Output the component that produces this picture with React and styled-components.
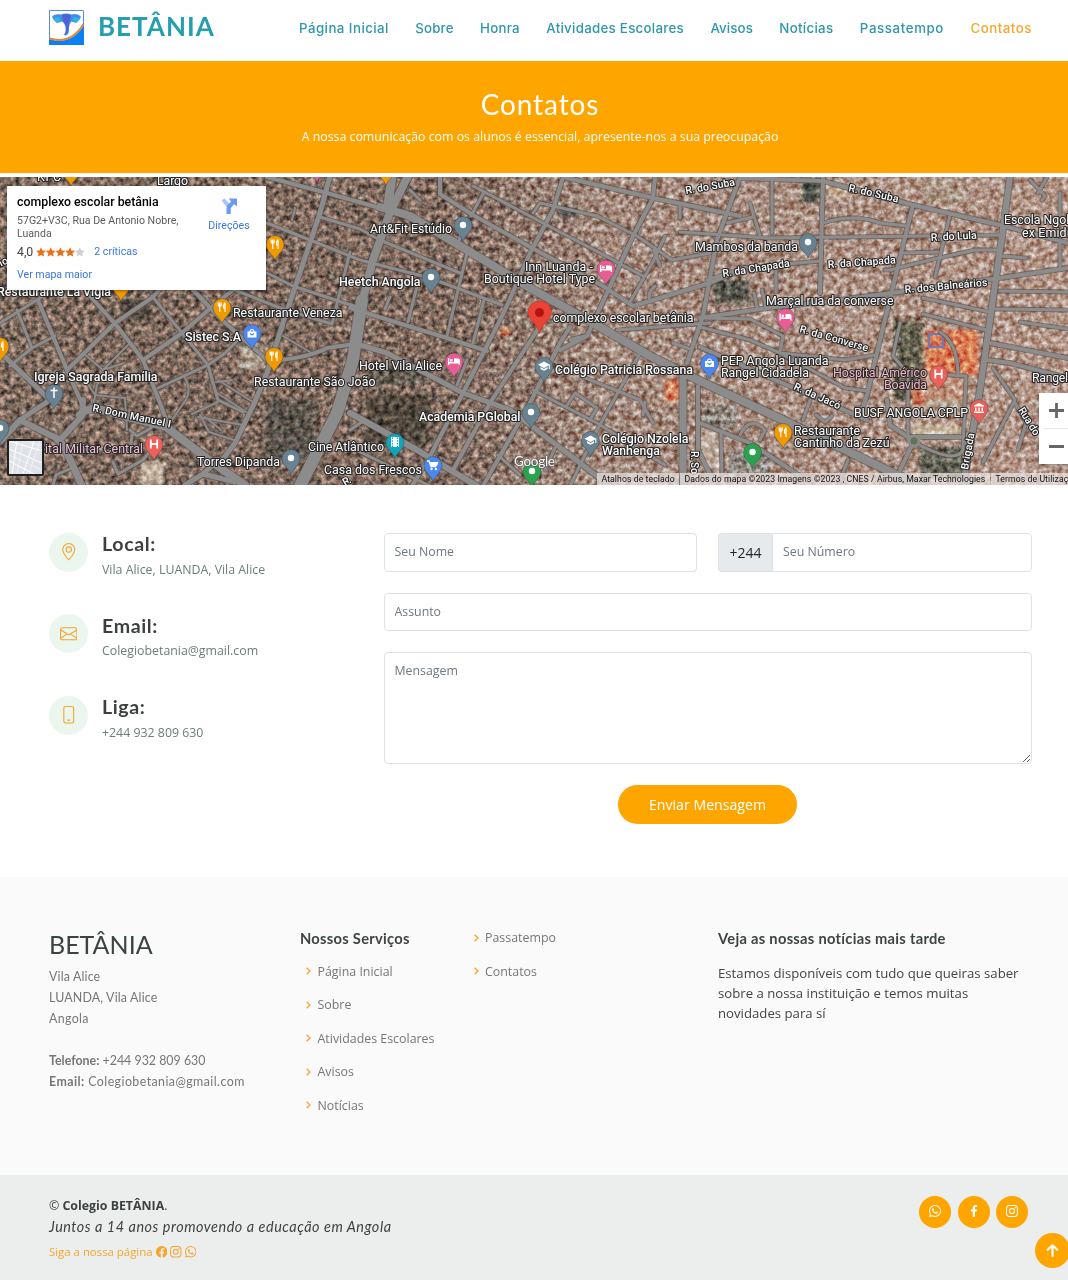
import React from "react";
import styled, { createGlobalStyle } from "styled-components";
import { BsGeoAlt, BsEnvelope, BsPhone, BsFacebook, BsInstagram, BsWhatsapp, BsArrowUpShort } from "react-icons/bs";
import { BiChevronRight, BiLogoWhatsapp, BiLogoFacebook, BiLogoInstagram } from "react-icons/bi";

const orange = "#ffa500";
const body = `"Open Sans", "Noto Sans", sans-serif`;
const heading = `Lato, "Open Sans", sans-serif`;
const geometric = `Inter, "Open Sans", sans-serif`;

const Global = createGlobalStyle`
  * { box-sizing: border-box; }
  body { margin: 0; background: #fff; font-family: ${body}; color: #444; }
  h1, h2, h3, h4, p, ul { margin: 0; padding: 0; font-weight: normal; }
  a { color: inherit; text-decoration: none; }
`;

const Page = styled.div`
  position: relative;
  width: 1068px;
  height: 1280px;
  overflow: hidden;
  display: flex;
  flex-direction: column;
`;

/* ---------- header ---------- */
const Header = styled.header`
  height: 61px;
  flex: none;
  display: flex;
  align-items: center;
  justify-content: space-between;
  padding: 0 36px 6px 49px;
`;
const Brand = styled.a`
  display: flex;
  align-items: center;
  gap: 14px;
`;
const BrandName = styled.h1`
  font: 700 26px/34px ${heading};
  letter-spacing: 1px;
  color: #259fb0;
  white-space: nowrap;
  margin-top: -4px;
`;
const Nav = styled.nav`
  display: flex;
  justify-content: space-between;
  width: 733px;
`;
const NavLink = styled.a`
  font: 500 13.3px/20px ${geometric};
  letter-spacing: ${(p) => p.$track || 0}px;
  white-space: nowrap;
  color: ${(p) => (p.$active ? "#f8a62c" : "#2f97ab")};
`;

/* ---------- banner ---------- */
const Banner = styled.section`
  height: 112px;
  flex: none;
  background: ${orange};
  color: #fff;
  text-align: center;
  padding: 26px 0 0 12px;
`;
const BannerTitle = styled.h2`
  font: 400 28px/34px ${heading};
  letter-spacing: 0.9px;
`;
const BannerText = styled.p`
  font: 400 12.35px/20px ${body};
  margin-top: 6px;
`;

/* ---------- map ---------- */
const MapFrame = styled.section`
  position: relative;
  height: 308px;
  margin-top: 4px;
  flex: none;
  overflow: hidden;
  background: #7a675b;
`;
const MapCanvas = styled.svg`
  display: block;
`;
const Place = styled.text`
  font: ${(p) => (p.$street ? "500 10.5px" : "400 12.4px")} Roboto, sans-serif;
  fill: ${(p) => p.$fill || "#fff"};
  stroke: #262626;
  stroke-width: ${(p) => (p.$fill ? 2 : 2.2)}px;
  stroke-linejoin: round;
  paint-order: stroke;
`;
const InfoCard = styled.div`
  position: absolute;
  left: 7px;
  top: 9px;
  width: 259px;
  height: 104px;
  background: #fff;
  box-shadow: 0 1px 3px rgba(0, 0, 0, 0.4);
  padding: 9px 10px;
  display: flex;
  justify-content: space-between;
  font-family: Roboto, sans-serif;
`;
const InfoMain = styled.div`
  width: 172px;
`;
const InfoTitle = styled.h3`
  font: 500 12.35px/15px Roboto, sans-serif;
  color: #000;
`;
const InfoAddress = styled.p`
  font-size: 10.6px;
  line-height: 13px;
  color: #5b5b5b;
  margin-top: 4px;
  white-space: nowrap;
`;
const Rating = styled.div`
  display: flex;
  align-items: center;
  margin-top: 4px;
  height: 16px;
  font-size: 12.3px;
  color: #444;
`;
const Stars = styled.svg`
  margin: 0 9px 0 3px;
`;
const BlueLink = styled.a`
  display: block;
  font-size: ${(p) => p.$size || 10.6}px;
  line-height: 14px;
  color: #3a76e0;
`;
const MoreLink = styled(BlueLink)`
  margin-top: 8px;
`;
const Directions = styled.div`
  width: 54px;
  display: flex;
  flex-direction: column;
  align-items: center;
  padding-top: 2px;
  gap: 4px;
`;
const ZoomPanel = styled.div`
  position: absolute;
  left: 1039px;
  top: 216px;
  width: 36px;
  height: 71px;
  background: #fff;
  box-shadow: 0 1px 3px rgba(0, 0, 0, 0.3);
`;
const LayerThumb = styled.div`
  position: absolute;
  left: 7px;
  top: 262px;
  width: 37px;
  height: 37px;
  border: 2px solid #1f1f1f;
  border-radius: 2px;
  overflow: hidden;
  background: #dfe2e8;
`;
const Attribution = styled.div`
  position: absolute;
  left: 597px;
  bottom: 0;
  display: flex;
  height: 12px;
  font: 400 8.7px/12px Roboto, sans-serif;
  letter-spacing: 0.07px;
  color: #111;
  white-space: nowrap;
`;
const AttributionItem = styled.span`
  background: rgba(235, 230, 228, 0.72);
  padding: 0 5px 0 4.5px;
  margin-right: 1px;
  width: ${(p) => p.$w}px;
`;

/* ---------- contact ---------- */
const Contact = styled.section`
  height: 392px;
  flex: none;
  display: grid;
  grid-template-columns: 334.5px 648.5px;
  padding: 47.5px 36px 0 49px;
`;
const InfoList = styled.div`
  display: flex;
  flex-direction: column;
  gap: 42.5px;
`;
const InfoRow = styled.div`
  display: flex;
  gap: 14px;
  height: 39px;
`;
const RoundIcon = styled.span`
  width: 39px;
  height: 39px;
  border-radius: 50%;
  background: #ebf7ee;
  display: grid;
  place-items: center;
  color: #f6a42c;
  font-size: 17.5px;
  flex: none;
`;
const InfoHeading = styled.h4`
  font: 700 19.6px/24px ${heading};
  color: #3c403f;
  letter-spacing: 0.6px;
  margin-top: -0.5px;
`;
const InfoText = styled.p`
  font-size: 12.35px;
  line-height: 19px;
  margin-top: 3.5px;
  color: #6a7f77;
  white-space: nowrap;
`;
const Form = styled.form`
  display: grid;
  grid-template-columns: 313.5px 313.5px;
  grid-template-rows: 39px 38.5px 111.5px 39px;
  gap: 21px;
`;
const fieldStyle = `
  border: 1px solid #dde1e5;
  border-radius: 4px;
  background: #fff;
  font: 400 12.35px/18px ${body};
  padding: 0 10px;
  outline: none;
  min-width: 0;
  &::placeholder { color: #6f7780; opacity: 1; }
`;
const Field = styled.input`
  ${fieldStyle}
  grid-column: ${(p) => (p.$wide ? "1 / -1" : "auto")};
`;
const Message = styled.textarea`
  ${fieldStyle}
  grid-column: 1 / -1;
  padding-top: 8.5px;
  resize: vertical;
`;
const PhoneGroup = styled.div`
  display: flex;
`;
const Prefix = styled.span`
  width: 54px;
  background: #e7eaed;
  border: 1px solid #dde1e5;
  border-right: 0;
  border-radius: 4px 0 0 4px;
  font-size: 14px;
  line-height: 37px;
  text-align: center;
  color: #212529;
`;
const PhoneField = styled(Field)`
  flex: 1;
  border-radius: 0 4px 4px 0;
`;
const Submit = styled.button`
  grid-column: 1 / -1;
  justify-self: center;
  width: 179px;
  border: 0;
  border-radius: 20px;
  background: ${orange};
  color: #fff;
  font: 400 14.15px/39px ${body};
  padding: 0;
`;

/* ---------- footer ---------- */
const FooterTop = styled.footer`
  height: 298px;
  flex: none;
  background: #fafafa;
  display: grid;
  grid-template-columns: 251px 167.5px 250.500px 1fr;
  padding: 50.5px 36px 0 49px;
`;
const FooterBrand = styled.h3`
  font: 400 25px/32px ${heading};
  letter-spacing: 0;
  color: #3b4442;
`;
const Address = styled.p`
  font: 400 12.4px/21.1px ${heading};
  color: #777;
  margin-top: 6px;
  white-space: nowrap;
  b { font-weight: 700; }
`;
const Line = styled.span`
  display: block;
  min-height: 21.1px;
  letter-spacing: ${(p) => p.$track || 0}px;
`;
const ColumnTitle = styled.h4`
  font: 700 14.7px/20px ${heading};
  color: #3f4443;
  white-space: nowrap;
  letter-spacing: 0.28px;
`;
const LinkList = styled.ul`
  list-style: none;
  display: flex;
  flex-direction: column;
  gap: 13.5px;
  padding: ${(p) => p.$pad};
`;
const LinkItem = styled.li`
  display: flex;
  align-items: center;
  gap: 1.5px;
  height: 20px;
  font-size: 12.4px;
  color: #777;
  white-space: nowrap;
  svg { color: #f5a52c; font-size: 16px; flex: none; }
`;
const News = styled.p`
  font-size: 13.2px;
  line-height: 20px;
  margin-top: 15.5px;
  color: #444;
  white-space: nowrap;
`;
const FooterBottom = styled.footer`
  height: 105px;
  flex: none;
  background: #eceeed;
  display: flex;
  justify-content: space-between;
  padding: 21px 40px 0 49px;
`;
const Copyright = styled.p`
  font-size: 12.35px;
  line-height: 19px;
  color: #3d4241;
`;
const Motto = styled.p`
  font: italic 400 14.4px/22px ${heading};
  letter-spacing: 0.54px;
  color: #3d4241;
  margin-top: 1px;
`;
const Follow = styled.p`
  display: flex;
  align-items: center;
  gap: 3px;
  margin-top: 5px;
  font-size: 11.4px;
  line-height: 18px;
  color: #f6a52e;
  svg { font-size: 11.5px; }
`;
const Socials = styled.div`
  display: flex;
  gap: 6.5px;
`;
const Social = styled.a`
  width: 32px;
  height: 32px;
  border-radius: 50%;
  background: ${orange};
  color: #fff;
  display: grid;
  place-items: center;
  font-size: 16px;
  svg { margin-top: -2px; }
`;
const BackToTop = styled.a`
  position: absolute;
  left: 1034.5px;
  top: 1233px;
  width: 35px;
  height: 35px;
  border-radius: 50%;
  background: ${orange};
  color: #fff;
  display: grid;
  place-items: center;
  font-size: 25px;
  svg { stroke: #fff; stroke-width: 0.4; }
`;

/* ---------- map data ---------- */
const roads = [
  [4, "M38 300 67 370 83 406"], [3, "M0 323 40 298 54 288"], [3, "M17 310 32 348 10 366M32 348 55 336"],
  [5, "M0 352 50 400 20 420"], [6, "M0 442 20 420 60 440 82 416 83 400"], [7, "M56 438 64 446 82 486"],
  [8, "M80 415Q88 404 112 413L166 427 213 463 245 485"], [4, "M67 370 115 323 153 297 160 289"],
  [4, "M90 296 117 326 143 360 160 403 170 430"], [3, "M152 296 182 333 208 365 218 400 243 412"],
  [4, "M143 360 182 333 213 306 233 290"], [3, "M158 388 208 365 224 354 238 340"],
  [4, "M193 290 222 320 267 360"], [5, "M330 176 320 213 283 323 267 373 253 406 235 443 220 463"],
  [3, "M267 223 310 240 360 260 430 278 502 305"], [3, "M235 290 280 308 332 324 350 252M267 273 293 286 360 308"],
  [4, "M267 177 327 193 387 210"], [3, "M320 217 360 229 380 240 460 273"],
  [4, "M280 360Q310 357 327 348L355 344"], [2, "M283 336 310 352M292 220 295 208"],
  [12, "M362 300 353 360 337 413 300 486"], [8, "M408 176 390 212 373 260 360 310"],
  [9, "M392 176 388 205"], [8, "M380 207 410 216 467 250 530 288 593 323 650 356 700 381 783 420 893 473 925 488"],
  [2, "M83 353 103 370 128 345M83 376 95 395 125 398 127 430M93 408 97 385M103 370 124 363"],
  [2, "M185 378Q193 392 183 404L172 420M218 380 253 402M217 393 246 412M216 382 232 380M192 414 218 402"],
  [2, "M198 417 243 425M200 415 209 432 234 440M205 417 221 430"], [3, "M130 430 137 436 151 428M132 435 130 452"],
  [3, "M113 462 118 474 143 460 155 445M53 485 56 475 74 467"], [5, "M185 485 203 474 235 482M203 474 216 462"],
  [4, "M563 177 553 210 530 253 505 310 463 393 430 456 412 486"], [4, "M440 177V194L473 215 532 248 603 286 633 306 710 283 745 268"],
  [3, "M473 186 543 223 600 253 643 276M484 192 471 216"], [3, "M533 213 540 203 597 216 637 236 672 260 710 253"],
  [4, "M563 177 653 198 740 216"], [4, "M655 177 653 198 633 236 607 293 587 336 571 340 M587 336 560 350"],
  [4, "M570 327 560 343 530 403 483 486"], [4, "M540 326 490 403 453 470"], [4, "M350 308 447 338 487 351"],
  [3, "M467 253 447 336M484 300 473 343M417 286 408 322M390 297 385 309M461 235 457 246"],
  [5, "M360 345 387 353 463 393 510 410 550 440 610 486"], [3, "M467 360 457 385M410 190 420 200"],
  [6, "M350 413 417 450 477 486"], [3, "M350 430 362 422M350 447 430 486"], [3, "M533 390 597 423 665 465"],
  [3, "M640 353 597 430 570 486M498 455 520 475M555 448 545 470"],
  [3, "M566 407 575 393 597 408 590 420M583 377 640 400 653 423M645 402 643 415"],
  [7, "M683 373V486"], [4, "M698 386V450L713 480"], [4, "M740 177 717 240 703 316 687 363"],
  [3, "M617 330 710 323M673 343 690 349M665 236 653 262 630 302M654 250 660 266M655 286Q647 292 650 302"],
  [3, "M680 205 680 218 M680 232 767 238 1000 235"], [4, "M740 178 823 181 913 205 1000 225 1068 243"],
  [4, "M823 177 820 293"], [3, "M772 177V233M750 203 760 236M727 223 753 217"], [6, "M1010 177 1002 236 990 320 980 390 963 486"],
  [4, "M913 205 897 270 880 340 867 395 860 415"], [3, "M823 223Q853 213 880 223L907 226M904 253 938 252M885 270 892 270"],
  [3, "M707 280 743 268 820 261M776 268 776 292M754 293 757 307M762 290 766 307"], [3, "M890 270 930 260 975 250 997 250"],
  [3, "M950 215 935 277"], [4, "M700 318 767 308 833 301 1000 278 1068 268"], [3, "M1000 291 1068 292M995 309 1068 310"],
  [3, "M923 298 990 312M923 314 986 330"], [4, "M990 343 1068 358M987 360 1010 363 1068 378"],
  [3, "M703 318 750 319 783 336 780 352"], [3, "M700 327 750 340 780 353 845 360 875 355M780 353 845 388 867 391"],
  [4, "M700 347 780 382 867 420"], [3, "M810 400 803 420M816 415 825 422 832 416"],
  [3, "M900 323 893 356 908 373V440M940 332Q957 342 958 373M935 374 966 376 963 450Q955 465 914 442"],
  [4, "M887 400 890 425 908 437 962 437M914 441 900 470"], [3, "M993 368 1015 400 983 462M1015 403 1030 430"],
  [4, "M700 423 750 443 800 476"], [3, "M721 433 722 475M740 435Q750 415 765 430L760 440M848 460 838 486"],
  [3, "M1030 180 1045 196 1042 200M1047 177 1038 193M1060 193V220M1020 322 1068 329M1002 256 1026 258M1027 420 1018 450M1060 240V270"],
];

const plots = [
  ["#4b443b", 365, 395, 65, 50], ["#55514a", 265, 400, 50, 60], ["#4b463d", 120, 300, 30, 20], ["#5a5a4a", 893, 320, 30, 80],
  ["#e27a4e", 926, 330, 52, 45], ["#d06c48", 912, 385, 55, 20], ["#d0c2aa", 912, 425, 48, 12], ["#b6aa94", 925, 398, 40, 10],
  ["#cfc0ab", 140, 462, 24, 22], ["#555a4e", 920, 447, 44, 30], ["#3f4a42", 802, 180, 18, 22], ["#c7ae95", 828, 184, 18, 14],
  ["#ac9a88", 925, 178, 40, 26], ["#4a4e44", 714, 280, 36, 24], ["#8a8780", 703, 405, 34, 22], ["#c0b0a2", 702, 432, 18, 38],
  ["#e0855a", 665, 380, 16, 22], ["#b5a998", 240, 345, 25, 25], ["#5c5950", 370, 365, 50, 20],
  ["#8d8b86", 730, 450, 40, 26], ["#c39781", 922, 376, 45, 20], ["#474c4e", 560, 206, 16, 12], ["#dc825c", 500, 328, 10, 8],
];

const pins = [
  ["food", 275, 245], ["food", 222, 308], ["food", 274, 357], ["food", 783, 433], ["food", 0, 347], ["food", 121, 286],
  ["food", 71, 171], ["food", 386, 170], ["dot", 463, 226], ["dot", 431, 278], ["dot", 808, 243], ["dot", 531, 413],
  ["dot", 291, 459], ["dot", 0, 429], ["bed", 606, 269.500], ["bed", 454, 362.500], ["bed", 785.500, 318], ["bag", 252, 334],
  ["bag", 709.500, 363.500], ["cart", 433, 466], ["film", 395, 443], ["school", 544, 367], ["school", 590.500, 441], ["cross", 54, 394],
  ["hospital", 154, 445], ["hospital", 938.500, 375], ["bank", 979, 409], ["park", 532, 472], ["park", 752.500, 453], ["bed", 317, 167],
];
const pinColors = {
  food: "#f29900", dot: "#688291", bed: "#e75e93", bag: "#4b87ee", cart: "#4b87ee", film: "#12a4b8", school: "#688291",
  cross: "#688291", hospital: "#ef6058", bank: "#e9605b", park: "#2aa24e",
};

const labels = [
  ["KFC", 37, 181, 24], ["Largo", 157, 185, 31], ["Restaurante La Vigia", -3, 296, 114], ["Restaurante Veneza", 233, 316.500, 109.500],
  ["Sistec S.A", 185, 341, 56], ["Restaurante São João", 254, 386, 121.500], ["Igreja Sagrada Família", 34, 381, 123.500],
  ["Torres Dipanda", 197, 466, 83], ["Cine Atlântico", 308, 451, 76], ["Casa dos Frescos", 324, 474, 98],
  ["Art&Fit Estúdio", 370, 233, 82], ["Heetch Angola", 339, 285.500, 81.500], ["Hotel Vila Alice", 359, 370, 83],
  ["Academia PGlobal", 419, 421, 101.500], ["Inn Luanda -", 525, 270.500, 68], ["Boutique Hotel Type", 484, 283, 111],
  ["complexo escolar betânia", 553, 321.500, 140.500], ["Colégio Patricia Rossana", 555, 374, 138], ["Colégio Nzolela", 602, 443, 86.500],
  ["Wanhenga", 602, 455, 58], ["Mambos da banda", 695, 251, 103], ["Marçal rua da converse", 766, 304.500, 127.500],
  ["PEP Angola Luanda", 721, 365, 107.500], ["Rangel Cidadela", 721, 377, 88], ["Restaurante", 794, 434.500, 66],
  ["Cantinho da Zezú", 794, 447, 95.500], ["BUSF ANGOLA CPLP", 854, 417, 114], ["Escola Ngola", 1004, 224, 72],
  ["ex Emidio", 1022, 237, 55], ["Rangel", 1032, 382, 36],
  ["pital Militar Central", 38, 453, 105, "#eebfd5"], ["Hospital Américo", 833, 377, 94, "#f3b9c9"], ["Boavida", 884, 389, 43, "#f3b9c9"],
];
const boldPlaces = ["Sistec S.A", "Heetch Angola", "Igreja Sagrada Família", "Academia PGlobal", "Colégio Patricia Rossana", "Colégio Nzolela", "Wanhenga", "Restaurante La Vigia"];
const Label = styled(Place)`
  font-weight: ${(p) => (p.$bold ? 500 : 400)};
`;
const streets = [
  ["R. do Suba", 686, 194, 50, -10], ["R. do Suba", 848, 191, 51, 13], ["R. do Lula", 931, 241, 46, -3],
  ["R. da Chapada", 723, 277, 68, -9], ["R. da Chapada", 828, 268, 68, -4], ["R. dos Balneários", 905, 293, 83, -5],
  ["R. da Converse", 799, 332, 71, 16], ["R. da Jacó", 793, 389, 50, 24], ["R. Dom Manuel I", 92, 411, 80, 12],
  ["R. So", 691, 451, 23, 90], ["Brigada", 968, 470, 37, -80], ["Rua do", 1018, 410, 31, 58], ["R.", 345, 486, 8, -30], ["no", -2, 268, 12, -25],
];

function Glyph({ kind }) {
  const s = { fill: "none", stroke: "#fff", strokeWidth: 1.5 };
  switch (kind) {
    case "food": return <path {...s} d="M-3.800-4.500V-1.500Q-2.300.500-.800-1.500V-4.500M-2.300-4.500V5M3-4.500V5M2.800-4Q1-2 1.600 1H3" strokeWidth="1.200" />;
    case "bed": return <path fill="#fff" d="M-6-3.500h1.300v4h4.700v-3.500h4q2 0 2 2v4.500h-1.300v-1.500h-9.400v1.500H-6zM-2.700-2.600a1.400 1.400 0 1 1 0 2.800a1.400 1.400 0 0 1 0-2.800z" />;
    case "bag": return <path fill="#fff" fillRule="evenodd" d="M-4.500-1.500h2a2.500 2.500 0 0 1 5 0H4.500v6H-4.500zM-1.500-1.500h3a1.500 1.500 0 0 0-3 0zM-2.500.5q2.500 4 5 0l-.8-.4q-1.700 2-3.400 0z" />;
    case "cart": return <><path {...s} d="M-6-4h2l2 5.500h5" /><path fill="#fff" d="M-3-3H5.500L4 1h-6z" /><circle cx="-1.500" cy="4" r="1.200" fill="#fff" /><circle cx="3" cy="4" r="1.200" fill="#fff" /></>;
    case "film": return <><path fill="#fff" d="M-4-5h8V5h-8z" /><path stroke="#12a4b8" strokeWidth="1.200" strokeDasharray="1.500 1.200" d="M-2.600-4.500V5M2.600-4.500V5" /></>;
    case "school": return <><path fill="#fff" d="M0-4.500 6-1.300 0 1.900-6-1.300zM-3.500 1 0 3 3.500 1V3L0 4.800-3.500 3z" /><path {...s} strokeWidth="1" d="M5.300-1.300V3" /></>;
    case "cross": return <path {...s} d="M0-5.500V5M-3.500-2.500H3.500" />;
    case "hospital": return <path {...s} strokeWidth="1.800" d="M-3.200-4.500V4.500M3.200-4.500V4.500M-3 0H3" />;
    case "bank": return <path fill="#fff" d="M0-5 5-2.500v1H-5v-1zM-4-.5h1.500v3.500H-4zM-.7-.5H.7v3.500H-.7zM2.500-.5H4v3.500H2.500zM-5 3.500H5V5H-5z" />;
    default: return <circle r="3.200" fill="#fff" />;
  }
}

function CityMap() {
  return (
    <MapCanvas width="1068" height="308" viewBox="0 177 1068 308">
      <defs>
        <linearGradient id="ground" x1="0" x2="1">
          <stop offset="0" stopColor="#7e6a5e" /><stop offset=".42" stopColor="#826c60" />
          <stop offset=".56" stopColor="#a38a7d" /><stop offset="1" stopColor="#b39688" />
        </linearGradient>
        <filter id="roofs" x="0" y="0" width="100%" height="100%" colorInterpolationFilters="sRGB">
          <feTurbulence type="fractalNoise" baseFrequency=".19" numOctaves="3" seed="8" />
          <feColorMatrix values="1.200 .2 0 0 -.2  1.200 0 .1 0 -.15  1.200 0 .2 0 -.2  0 0 0 0 1" />
        </filter>
        <filter id="soft"><feGaussianBlur stdDeviation="2" /></filter>
      </defs>
      <rect y="177" width="1068" height="308" fill="url(#ground)" />
      <g filter="url(#soft)" opacity=".85">
        {plots.map(([c, x, y, w, h], i) => <rect key={i} x={x} y={y} width={w} height={h} fill={c} />)}
      </g>
      <rect y="177" width="1068" height="308" filter="url(#roofs)" style={{ mixBlendMode: "overlay" }} opacity=".85" />
      <path d="M929 334h14v13h-14z" fill="none" stroke="#7a78a6" strokeWidth="2.500" />
      <g fill="none" strokeLinejoin="round" strokeLinecap="round">
        {roads.map(([w, d], i) => <path key={i} d={d} stroke="#57504d" strokeOpacity=".65" strokeWidth={w + 2} />)}
        {roads.map(([w, d], i) => <path key={i} d={d} stroke="#8d8c8c" strokeWidth={w} />)}
      </g>
      <circle cx="914" cy="441" r="5" fill="#5f7358" stroke="#8b8b8a" strokeWidth="3" />
      {pins.map(([kind, x, y], i) => (
        <g key={i} transform={`translate(${x} ${y})`}>
          <path d="M0 15.500C-2 9-9 6.500-9-.5A9 9 0 1 1 9-.5C9 6.500 2 9 0 15.500Z" fill={pinColors[kind]} stroke="#33414a" strokeOpacity=".55" strokeWidth=".8" />
          <g transform="translate(0 -1)"><Glyph kind={kind} /></g>
        </g>
      ))}
      <path d="M539.500 333.500C537 323 528 320 528 312.500A11.700 11.700 0 1 1 551.400 312.500C551.400 320 542 323 539.500 333.500Z" fill="#ea4335" stroke="#b9362c" strokeWidth=".6" />
      <circle cx="539.500" cy="312.500" r="4.500" fill="#b31412" />
      {labels.map(([t, x, y, w, fill], i) => <Label key={i} x={x} y={y} textLength={w} $fill={fill} $bold={boldPlaces.includes(t)}>{t}</Label>)}
      {streets.map(([t, x, y, w, r], i) => <Place key={i} $street x={x} y={y} textLength={w} transform={`rotate(${r} ${x} ${y})`}>{t}</Place>)}
      <text x="514" y="466" textLength="41" fontFamily="Lato, sans-serif" fontSize="13.500" fill="#fff" stroke="#555" strokeWidth="1" paintOrder="stroke">Google</text>
    </MapCanvas>
  );
}

function Logo() {
  return (
    <svg width="35" height="35" viewBox="0 0 35 35">
      <path d="M.5.500h34v34H.5z" fill="#fff" stroke="#5c8bdd" />
      <path d="M0 29Q22 36 35 15V35H0z" fill="#0a80f5" />
      <path d="M.5 28.500Q22 35 34.500 14" fill="none" stroke="#e5853a" strokeWidth="2" />
      <path d="M3 7Q5 3.500 12 4.500Q17 2.500 22 4.500Q29 3 32 7Q31 10 27 13L22.500 11.500Q20 14 20 19Q20 24.500 17 25.500L14.500 25Q17 23 16.500 18Q16 13 13 11.500L8 13Q4 10 3 7Z" fill="#3d8fe6" />
      <path d="M13 5Q17 3 22 5L20 13 19 20Q19 24 16 24.500Q18 21 17 15L14 11Z" fill="#5260d6" />
      <path d="M4 8 10 7 12 10 8 12.500zM25 7 31 8 27 12.500 23 10z" fill="#30b4e6" />
    </svg>
  );
}

const star = (x) => `M${x} 0.200l1.500 3.200 3.500.4-2.600 2.400.7 3.400-3.100-1.700-3.100 1.700.7-3.400-2.600-2.400 3.500-.4z`;

function MapPanel() {
  return (
    <MapFrame>
      <CityMap />
      <InfoCard>
        <InfoMain>
          <InfoTitle>complexo escolar betânia</InfoTitle>
          <InfoAddress>57G2+V3C, Rua De Antonio Nobre,<br />Luanda</InfoAddress>
          <Rating>
            4,0
            <Stars width="49" height="10" viewBox="0 0 49 10">
              {[5, 14.700, 24.400, 34.100, 43.800].map((x, i) => <path key={x} d={star(x)} fill={i < 4 ? "#e7711b" : "#cfcfcf"} />)}
            </Stars>
            <BlueLink>2 críticas</BlueLink>
          </Rating>
          <MoreLink>Ver mapa maior</MoreLink>
        </InfoMain>
        <Directions>
          <svg width="18" height="18" viewBox="0 0 18 18">
            <path d="M1.500 3.500 4.500 1.500 9.500 7 8 11.500z" fill="#a9c4f8" />
            <path d="M6.500 17V11.500Q6.500 9 8.300 7.200L11.200 4.400 8.700 1.500H17V9.500L14.200 7.200 11.400 10.200Q10.700 11 10.700 12V17z" fill="#6b9af2" />
          </svg>
          <BlueLink $size={10.6}>Direções</BlueLink>
        </Directions>
      </InfoCard>
      <LayerThumb>
        <svg width="33" height="33" viewBox="0 0 33 33" fill="none" stroke="#fff">
          <path strokeWidth="1" d="M0 8 33 22M8 0 3 33M0 20 25 33M25 0 14 33M0 0 33 10" /><path strokeWidth=".5" d="M0 14 33 29M14 0 8 33M31 0 20 33M18 0 33 5" />
        </svg>
      </LayerThumb>
      <ZoomPanel>
        <svg width="36" height="71" fill="none" stroke="#666" strokeWidth="2.800">
          <path d="M10 17.500H25M17.500 10V25M10 53.500H25" /><path d="M5 35.500H31" stroke="#e6e6e6" strokeWidth="1" />
        </svg>
      </ZoomPanel>
      <Attribution>
        <AttributionItem $w={82}>Atalhos de teclado</AttributionItem>
        <AttributionItem $w={310}>Dados do mapa ©2023 Imagens ©2023 , CNES / Airbus, Maxar Technologies</AttributionItem>
        <AttributionItem $w={90}>Termos de Utilização</AttributionItem>
      </Attribution>
    </MapFrame>
  );
}

const navItems = [
  ["Página Inicial", 0.45], ["Sobre", 0.15], ["Honra", 0.25], ["Atividades Escolares", 0.28],
  ["Avisos", 0.1], ["Notícias", 0.3], ["Passatempo", 0.6], ["Contatos", 0.5],
];
const contacts = [
  [BsGeoAlt, "Local:", "Vila Alice, LUANDA, Vila Alice"],
  [BsEnvelope, "Email:", "Colegiobetania@gmail.com"],
  [BsPhone, "Liga:", "+244 932 809 630"],
];

const Links = ({ items, pad }) => (
  <LinkList $pad={pad}>
    {items.map((t) => <LinkItem key={t}><BiChevronRight /><a>{t}</a></LinkItem>)}
  </LinkList>
);

export default function App() {
  return (
    <Page>
      <Global />
      <Header>
        <Brand><Logo /><BrandName>BETÂNIA</BrandName></Brand>
        <Nav>{navItems.map(([t, track]) => <NavLink key={t} $track={track} $active={t === "Contatos"}>{t}</NavLink>)}</Nav>
      </Header>
      <Banner>
        <BannerTitle>Contatos</BannerTitle>
        <BannerText>A nossa comunicação com os alunos é essencial, apresente-nos a sua preocupação</BannerText>
      </Banner>
      <MapPanel />
      <Contact>
        <InfoList>
          {contacts.map(([Icon, title, text]) => (
            <InfoRow key={title}>
              <RoundIcon><Icon /></RoundIcon>
              <div><InfoHeading>{title}</InfoHeading><InfoText>{text}</InfoText></div>
            </InfoRow>
          ))}
        </InfoList>
        <Form>
          <Field placeholder="Seu Nome" />
          <PhoneGroup><Prefix>+244</Prefix><PhoneField placeholder="Seu Número" /></PhoneGroup>
          <Field $wide placeholder="Assunto" />
          <Message placeholder="Mensagem" />
          <Submit type="button">Enviar Mensagem</Submit>
        </Form>
      </Contact>
      <FooterTop>
        <div>
          <FooterBrand>BETÂNIA</FooterBrand>
          <Address>
            <Line $track={0.15}>Vila Alice</Line><Line $track={0.15}>LUANDA, Vila Alice</Line><Line $track={0.35}>Angola</Line><Line />
            <Line><b>Telefone:</b> +244 932 809 630</Line>
            <Line $track={0.43}><b>Email:</b> Colegiobetania@gmail.com</Line>
          </Address>
        </div>
        <div>
          <ColumnTitle>Nossos Serviços</ColumnTitle>
          <Links pad="13.500px 0 0 0" items={["Página Inicial", "Sobre", "Atividades Escolares", "Avisos", "Notícias"]} />
        </div>
        <Links pad="0" items={["Passatempo", "Contatos"]} />
        <div>
          <ColumnTitle>Veja as nossas notícias mais tarde</ColumnTitle>
          <News>Estamos disponíveis com tudo que queiras saber<br />sobre a nossa instituição e temos muitas<br />novidades para sí</News>
        </div>
      </FooterTop>
      <FooterBottom>
        <div>
          <Copyright>© <b>Colegio BETÂNIA</b>.</Copyright>
          <Motto>Juntos a 14 anos promovendo a educação em Angola</Motto>
          <Follow>Siga a nossa página <BsFacebook /><BsInstagram /><BsWhatsapp /></Follow>
        </div>
        <Socials>
          <Social><BiLogoWhatsapp /></Social><Social><BiLogoFacebook /></Social><Social><BiLogoInstagram /></Social>
        </Socials>
      </FooterBottom>
      <BackToTop><BsArrowUpShort /></BackToTop>
    </Page>
  );
}
